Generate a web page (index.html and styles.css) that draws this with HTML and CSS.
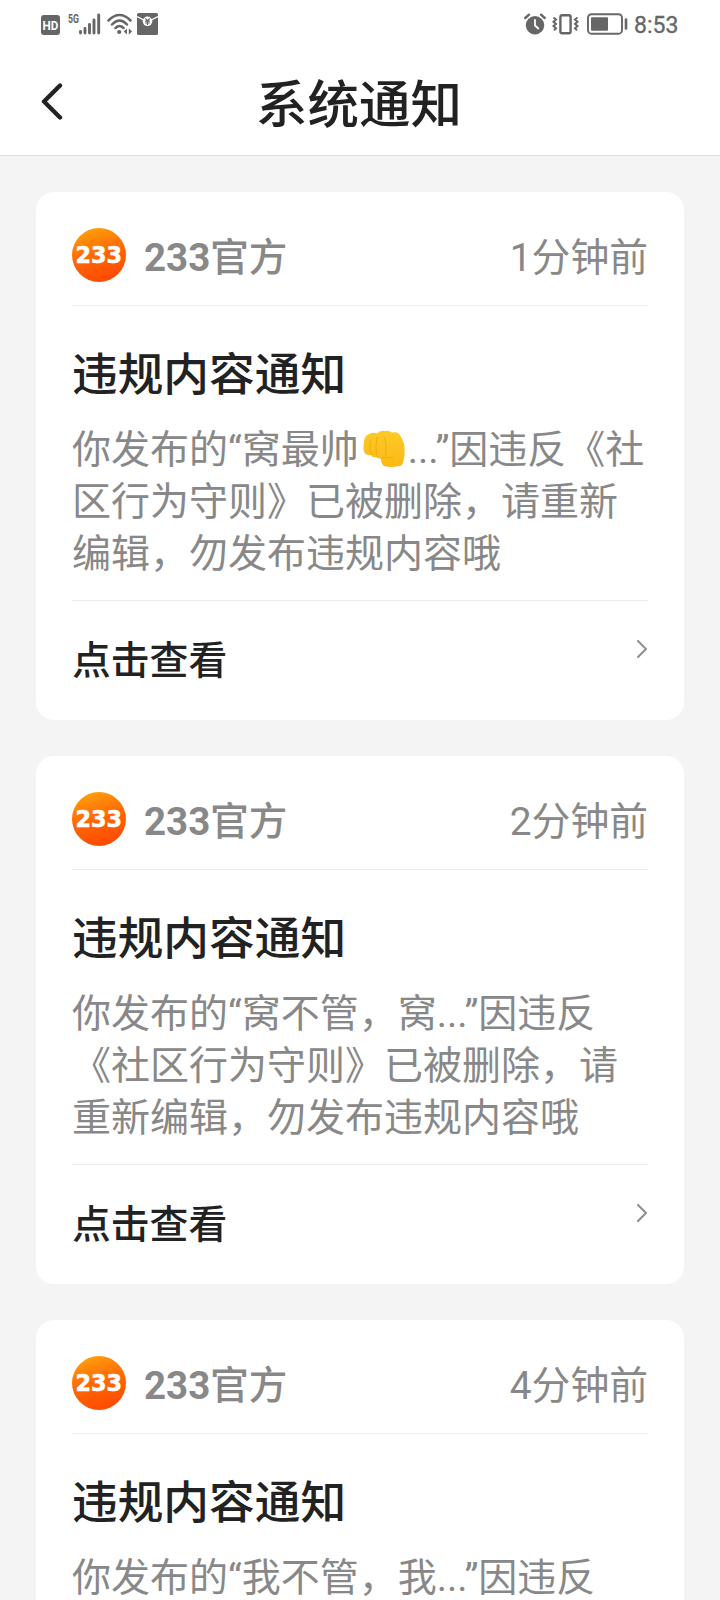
FILE: index.html
```
<!DOCTYPE html>
<html lang="zh-CN">
<head>
<meta charset="utf-8">
<title>系统通知</title>
<link rel="stylesheet" href="styles.css">
</head>
<body>
<svg class="defs" width="0" height="0" aria-hidden="true">
  <defs>
    <linearGradient id="orange" x1="0.2" y1="0" x2="0.5" y2="1">
      <stop offset="0" stop-color="#ffa30c"/>
      <stop offset="0.5" stop-color="#ff6a05"/>
      <stop offset="1" stop-color="#ff4a02"/>
    </linearGradient>
    <linearGradient id="skin" x1="0" y1="0" x2="0" y2="1">
      <stop offset="0" stop-color="#fdca28"/>
      <stop offset="1" stop-color="#fbb914"/>
    </linearGradient>
    <symbol id="logo" viewBox="0 0 54 54">
      <circle cx="27" cy="27" r="27" fill="url(#orange)"/>
      <text class="logo-text" x="3.5" y="34.6" textLength="46.5" lengthAdjust="spacingAndGlyphs">233</text>
    </symbol>
    <symbol id="chevron" viewBox="0 0 12 20">
      <path d="M2 2 L10 10 L2 18" fill="none" stroke="#929292" stroke-width="2.2" stroke-linecap="round" stroke-linejoin="round"/>
    </symbol>
  </defs>
</svg>

<header class="status">
  <div class="status-left">
    <svg class="ic-hd" viewBox="0 0 19 20"><rect width="19" height="20" rx="3" fill="#666"/><text class="hd-text" x="1.6" y="14.6" textLength="15.8" lengthAdjust="spacingAndGlyphs">HD</text></svg>
    <svg class="ic-signal" viewBox="0 0 34 22">
      <text class="g-text" x="0" y="9.5" textLength="11" lengthAdjust="spacingAndGlyphs">5G</text>
      <path d="M12.5 18.5v1.5M17 15.5v4.5M21.5 11.5v8.5M26 7v13M30.7 2v18" stroke="#666" stroke-width="2.9" stroke-linecap="round"/>
    </svg>
    <svg class="ic-wifi" viewBox="0 0 26 22">
      <g fill="none" stroke="#666" stroke-width="2.5" stroke-linecap="round"><path d="M1.5 7.5Q12.5 -3.5 23.5 7.5"/><path d="M5 11.5Q12.500 3.500 20 11.500"/><path d="M8.500 15Q12.500 11 16.500 15"/></g>
      <circle cx="12.200" cy="19" r="2.100" fill="#666"/><path d="M20 15.500v6l-3.300-3zM21.800 15.500v6l3.300-3z" fill="#666"/>
    </svg>
    <svg class="ic-packet" viewBox="0 0 21 22">
      <rect width="21" height="22" rx="1.500" fill="#666"/><path d="M0 3.500Q10.500 11 21 3.500" fill="none" stroke="#fff" stroke-width="1.400"/><circle cx="10.500" cy="8.300" r="4.800" fill="#fff"/><path d="M8.300 5.300l2.200 2.700 2.200-2.700M8.200 8.100h4.600M8.200 10h4.600M10.500 8v4" fill="none" stroke="#666" stroke-width="1.200"/>
    </svg>
  </div>
  <div class="status-right">
    <svg class="ic-alarm" viewBox="0 0 22 22">
      <circle cx="11" cy="12.300" r="9.200" fill="#666"/><path d="M1.300 5L5 1.700M20.700 5L17 1.700" stroke="#666" stroke-width="2.400" stroke-linecap="round"/><path d="M11 7v5.500l3.300 3" fill="none" stroke="#fff" stroke-width="1.800" stroke-linecap="round"/>
    </svg>
    <svg class="ic-vibrate" viewBox="0 0 27 22">
      <rect x="8.400" y="2.200" width="10.200" height="18" rx="1.800" fill="none" stroke="#666" stroke-width="2.400"/><path d="M1.500 4.500l2.500 2-2.500 2.200 2.500 2.200-2.500 2.200 2.500 2.200-2 2M25.500 4.500l-2.500 2 2.500 2.200-2.500 2.200 2.500 2.200-2.500 2.200 2 2" fill="none" stroke="#666" stroke-width="2"/>
    </svg>
    <svg class="ic-battery" viewBox="0 0 42 22">
      <rect x="1" y="1.200" width="34" height="19.500" rx="3.500" fill="none" stroke="#666" stroke-width="1.900"/><rect x="4" y="4.200" width="17" height="13.500" rx="1" fill="#666"/><path d="M39 6.500v9" stroke="#666" stroke-width="2.600" stroke-linecap="round"/>
    </svg>
    <span class="clock">8:53</span>
  </div>
</header>

<nav class="bar">
  <svg class="back" viewBox="0 0 24 40"><path d="M21 4.500L5 20.500L21 36.500" fill="none" stroke="#222" stroke-width="4.400" stroke-linecap="round" stroke-linejoin="round"/></svg>
  <h1 class="bar-title">系统通知</h1>
</nav>

<main class="list">
  <article class="card">
    <div class="card-head"><svg class="avatar"><use href="#logo"/></svg><span class="name"><b>233</b>官方</span><time class="time">1分钟前</time></div>
    <h2 class="title">违规内容通知</h2>
    <p class="body">你发布的“窝最帅<svg class="fist" viewBox="0 0 42 38"><path d="M0.500 16Q1 5 6 4Q10 2 14 3.500Q17 0 22 1Q26 0 29 2.500Q36 1 38 7Q42 13 41.500 21Q42 26 40.500 30Q40 36 36 36Q28 38 21 36Q18 34 18 28.500Q15 29 13 27Q10 28 8 25Q5 26 2 23.500Q0 21 0.500 16Z" fill="url(#skin)"/><path d="M7.500 10Q6 17 8 24.500M14 7Q12 16 13.500 26.500M22 7Q24 16 22.500 26M18 28.500Q24 26 30 28" fill="none" stroke="#f0a90f" stroke-width="0.900" stroke-linecap="round"/></svg>...”因违反《社<br>区行为守则》已被删除，请重新<br>编辑，勿发布违规内容哦</p>
    <div class="card-foot"><span>点击查看</span><svg class="more"><use href="#chevron"/></svg></div>
  </article>
  <article class="card">
    <div class="card-head"><svg class="avatar"><use href="#logo"/></svg><span class="name"><b>233</b>官方</span><time class="time">2分钟前</time></div>
    <h2 class="title">违规内容通知</h2>
    <p class="body">你发布的“窝不管，窝...”因违反<br>《社区行为守则》已被删除，请<br>重新编辑，勿发布违规内容哦</p>
    <div class="card-foot"><span>点击查看</span><svg class="more"><use href="#chevron"/></svg></div>
  </article>
  <article class="card card-cut">
    <div class="card-head"><svg class="avatar"><use href="#logo"/></svg><span class="name"><b>233</b>官方</span><time class="time">4分钟前</time></div>
    <h2 class="title">违规内容通知</h2>
    <p class="body">你发布的“我不管，我...”因违反</p>
  </article>
</main>
</body>
</html>
```

FILE: styles.css
```
* { box-sizing: border-box; }
html, body { margin: 0; height: 1600px; overflow: hidden; }
body {
  width: 720px;
  background: #f4f4f4;
  color: #222;
  font-family: Roboto, "Noto Sans CJK SC", sans-serif;
  text-spacing-trim: space-all;
  display: flex;
  flex-direction: column;
}
svg { display: block; flex: none; }
.defs { position: absolute; }

.status {
  flex: none;
  height: 48px;
  padding: 0 41px;
  background: #fff;
  display: flex;
  justify-content: space-between;
}
.status-left, .status-right { display: flex; align-items: flex-start; padding-top: 13px; }
.ic-hd { width: 19px; height: 20px; margin-top: 2px; }
.ic-signal { width: 34px; height: 22px; margin-left: 8px; }
.ic-wifi { width: 26px; height: 22px; margin-left: 5px; }
.ic-packet { width: 21px; height: 22px; margin-left: 4px; }
.hd-text { font: 700 12.5px Roboto, sans-serif; fill: #fff; }
.g-text { font: 700 12.5px Roboto, sans-serif; fill: #666; }
.ic-alarm { width: 22px; height: 22px; margin-right: 6px; }
.ic-vibrate { width: 27px; height: 22px; margin-right: 8px; }
.ic-battery { width: 42px; height: 22px; margin-right: 5px; }
.clock {
  width: 45px;
  font-size: 23px;
  line-height: 26px;
  color: #666;
  -webkit-text-stroke: 0.3px #666;
  white-space: nowrap;
}

.bar {
  flex: none;
  height: 108px;
  padding: 0 41px 0 39px;
  background: #fff;
  border-bottom: 1px solid #dedede;
  display: grid;
  grid-template-columns: 24px 1fr 24px;
}
.back { width: 24px; height: 40px; margin-top: 33px; }
.bar-title {
  margin: 0;
  padding-top: 3px;
  font-size: 51.5px;
  line-height: 110px;
  height: 107px;
  font-weight: 500;
  text-align: center;
}

.list {
  flex: 1;
  min-height: 0;
  overflow: hidden;
  padding: 36px 36px 0;
  display: flex;
  flex-direction: column;
  gap: 36px;
}
.card {
  flex: none;
  height: 528px;
  padding: 0 36px;
  border-radius: 18px;
  background: #fff;
}
.card-cut { height: 280px; border-radius: 18px 18px 0 0; }
.card-head {
  height: 114px;
  padding-top: 12px;
  border-bottom: 1px solid #ebebeb;
  display: flex;
  align-items: center;
  color: #888;
  font-size: 38.8px;
}
.avatar { width: 54px; height: 54px; }
.logo-text {
  font: 700 23px "DejaVu Sans", sans-serif;
  fill: #fff;
  stroke: #fff;
  stroke-width: 0.6px;
}
.name, .time { padding-bottom: 1px; }
.name { margin-left: 18px; font-size: 38.5px; font-weight: 500; }
.name b { font-weight: 700; }
.time { margin-left: auto; }
.title {
  margin: 0;
  padding: 40px 0 0;
  font-size: 45.7px;
  line-height: 60px;
  font-weight: 500;
}
.body {
  margin: 0;
  padding-top: 18px;
  font-size: 39px;
  line-height: 52px;
  color: #888;
  white-space: nowrap;
}
.fist { display: inline-block; width: 42px; height: 38px; margin: 0 3px 0 4px; vertical-align: -5px; }
.card-foot {
  height: 120px;
  margin-top: 20px;
  border-top: 1px solid #ebebeb;
  display: flex;
  justify-content: space-between;
  font-size: 38.8px;
  line-height: 120px;
  font-weight: 500;
}
.more { width: 12px; height: 20px; margin-top: 38px; }
```
